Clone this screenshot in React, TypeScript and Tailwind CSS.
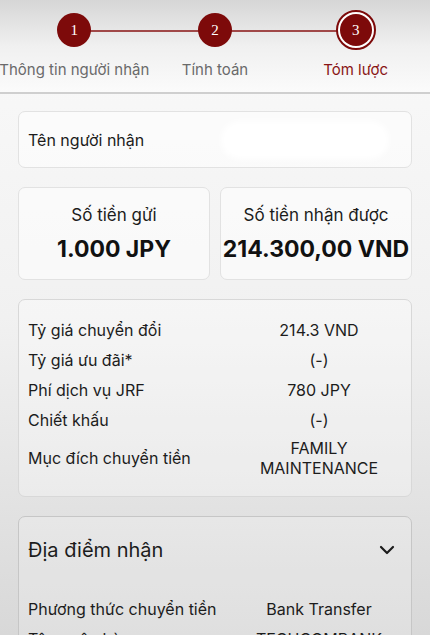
import { ChevronDown } from 'lucide-react';

const steps = [
  { n: 1, label: 'Thông tin người nhận' },
  { n: 2, label: 'Tính toán' },
  { n: 3, label: 'Tóm lược', active: true },
];

const rates = [
  { label: 'Tỷ giá chuyển đổi', value: '214.3 VND' },
  { label: 'Tỷ giá ưu đãi*', value: '(-)' },
  { label: 'Phí dịch vụ JRF', value: '780 JPY' },
  { label: 'Chiết khấu', value: '(-)' },
  { label: 'Mục đích chuyển tiền', value: 'FAMILY MAINTENANCE' },
];

const receive = [
  { label: 'Phương thức chuyển tiền', value: 'Bank Transfer' },
  { label: 'Tên ngân hàng', value: 'TECHCOMBANK' },
];

export default function App() {
  return (
    <div
      className="h-[635px] w-[430px] overflow-hidden bg-gradient-to-b from-[#fafafa] via-[#f1f1f1] to-[#d8d8d8] text-[#1c1c1c]"
      style={{ fontFamily: 'Inter, "Liberation Sans", sans-serif' }}
    >
      {/* Stepper */}
      <div className="relative h-[94px] border-b-2 border-[#cfcfcf] bg-gradient-to-b from-[#d6d6d6] via-[#f0f0f0] to-[#fbfbfb] px-[4px]">
        <div className="absolute left-[74px] right-[74px] top-[30px] h-[2px] bg-[#a04848]" />
        <div className="relative grid grid-cols-3">
          {steps.map((s) => (
            <div key={s.n} className="flex flex-col items-center">
              <div className="mt-[10px] flex h-[40px] w-[40px] items-center justify-center">
                {s.active ? (
                  <div className="flex h-[40px] w-[40px] items-center justify-center rounded-full border-2 border-[#7d0a0a] bg-white">
                    <div className="flex h-[32px] w-[32px] items-center justify-center rounded-full bg-[#7d0a0a] text-[15px] text-white" style={{ fontFamily: '"Liberation Serif", serif' }}>
                      {s.n}
                    </div>
                  </div>
                ) : (
                  <div className="flex h-[34px] w-[34px] items-center justify-center rounded-full bg-[#7d0a0a] text-[15px] text-white" style={{ fontFamily: '"Liberation Serif", serif' }}>
                    {s.n}
                  </div>
                )}
              </div>
              <div className={`mt-[9px] whitespace-nowrap text-[15px] ${s.active ? 'text-[#8a1515]' : 'text-[#6a6a6a]'}`}>
                {s.label}
              </div>
            </div>
          ))}
        </div>
      </div>

      <div className="flex flex-col gap-[19px] px-[18px] pt-[17px]">
        {/* Recipient name */}
        <div className="flex h-[57px] items-center justify-between rounded-[7px] border border-[#e2e2e2] bg-white/50 pl-[9px] pr-[10px]">
          <span className="text-[16px] leading-[24px]">Tên người nhận</span>
          <div className="mr-[12px] h-[38px] w-[168px] rounded-[20px] bg-white blur-[3px]" />
        </div>

        {/* Amounts */}
        <div className="grid grid-cols-2 gap-[10px]">
          <div className="flex h-[93px] flex-col items-center gap-[7px] rounded-[7px] border border-[#e2e2e2] bg-white/50 pt-[15px]">
            <span className="text-[17px] leading-[24px]">Số tiền gửi</span>
            <span className="text-[23px] font-bold leading-[30px] text-[#111]">1.000 JPY</span>
          </div>
          <div className="flex h-[93px] flex-col items-center gap-[7px] rounded-[7px] border border-[#e2e2e2] bg-white/50 pt-[15px]">
            <span className="text-[17px] leading-[24px]">Số tiền nhận được</span>
            <span className="text-[23px] font-bold leading-[30px] text-[#111]">214.300,00 VND</span>
          </div>
        </div>

        {/* Rates */}
        <div className="flex h-[198px] flex-col justify-center gap-[6px] rounded-[7px] border border-[#d8d8d8] bg-white/30 pl-[9px] pr-[10px]">
          {rates.map((r) => (
            <div key={r.label} className="grid grid-cols-[209px_1fr] items-center">
              <span className="text-[16px] leading-[24px]">{r.label}</span>
              <span className="text-center text-[16px] leading-[20px]">{r.value}</span>
            </div>
          ))}
        </div>

        {/* Receive location */}
        <div className="rounded-[7px] border border-[#c6c6c6] bg-white/20 pl-[9px] pr-[10px] pt-[18px]">
          <div className="flex items-center justify-between">
            <span className="text-[20px]">Địa điểm nhận</span>
            <ChevronDown className="mr-[2px] h-[24px] w-[24px]" strokeWidth={2.2} />
          </div>
          <div className="mt-[32px] flex flex-col gap-[6px]">
            {receive.map((r) => (
              <div key={r.label} className="grid grid-cols-[209px_1fr] items-center">
                <span className="text-[16px] leading-[24px]">{r.label}</span>
                <span className="text-center text-[16px] leading-[24px]">{r.value}</span>
              </div>
            ))}
          </div>
        </div>
      </div>
    </div>
  );
}
